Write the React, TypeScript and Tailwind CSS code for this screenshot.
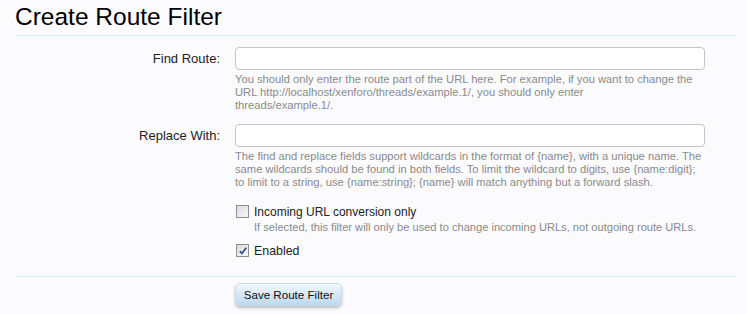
import { ReactNode } from 'react'

const FONT = "font-['Liberation_Sans',Arial,sans-serif]"

function Box({ checked }: { checked?: boolean }) {
  return (
    <span className="relative mt-[1px] inline-flex size-[13px] shrink-0 items-center justify-center border border-[#8e8f8f] bg-gradient-to-br from-[#dcdcdc] to-[#f8f8f8]">
      {checked && (
        <svg viewBox="0 0 11 11" className="size-[10px]">
          <path d="M2 5.5 L4.3 8.2 L9 2" fill="none" stroke="#2b4592" strokeWidth="1.8" />
        </svg>
      )}
    </span>
  )
}

function Row({ label, children }: { label: string; children: ReactNode }) {
  return (
    <div className="flex gap-[15px]">
      <div className="w-[205px] shrink-0 text-right text-[13px] leading-[23px] text-[#222]">{label}</div>
      <div className="w-[470px]">{children}</div>
    </div>
  )
}

// lines kept as in the original wrap
function Hint({ lines }: { lines: string[] }) {
  return (
    <p className="mt-[3px] text-[11.2px] leading-[13px] text-[#8a8a8a]">
      {lines.map((l) => (
        <span key={l} className="block whitespace-nowrap">
          {l}
        </span>
      ))}
    </p>
  )
}

export default function App() {
  return (
    <div className={`min-h-screen bg-[#fbfbfe] pl-[15px] pr-[12px] ${FONT}`}>
      <h1 className="h-[36px] border-b border-[#d7ecfa] pt-[1px] text-[24.5px] leading-[32px] text-black">
        Create Route Filter
      </h1>

      <div className="mt-[11px] flex flex-col gap-[12px]">
        <Row label="Find Route:">
          <input className="block h-[23px] w-full rounded-[4px] border border-[#c4c4c4] bg-white" />
          <Hint
            lines={[
              'You should only enter the route part of the URL here. For example, if you want to change the',
              'URL http://localhost/xenforo/threads/example.1/, you should only enter',
              'threads/example.1/.',
            ]}
          />
        </Row>

        <Row label="Replace With:">
          <input className="block h-[23px] w-full rounded-[4px] border border-[#c4c4c4] bg-white" />
          <Hint
            lines={[
              'The find and replace fields support wildcards in the format of {name}, with a unique name. The',
              'same wildcards should be found in both fields. To limit the wildcard to digits, use {name:digit};',
              'to limit to a string, use {name:string}; {name} will match anything but a forward slash.',
            ]}
          />
        </Row>
      </div>

      <div className="ml-[221px] mt-[15px] flex flex-col">
        <label className="flex gap-[5px]">
          <Box />
          <span>
            <span className="block text-[12px] leading-[16px] text-[#222]">Incoming URL conversion only</span>
            <span className="mt-[1px] block text-[11.1px] leading-[13px] text-[#8a8a8a]">
              If selected, this filter will only be used to change incoming URLs, not outgoing route URLs.
            </span>
          </span>
        </label>
        <label className="mt-[9px] flex gap-[5px]">
          <Box checked />
          <span className="text-[12.4px] leading-[16px] text-[#222]">Enabled</span>
        </label>
      </div>

      <div className="mt-[17px] border-t border-[#d7ecfa] pl-[220px] pt-[5px]">
        <button className="h-[23px] w-[107px] rounded-[5px] border border-[#c9dbea] bg-gradient-to-b from-[#f2f8fd] to-[#bcd8ef] text-[11.6px] text-[#111] shadow-[0_2px_3px_rgba(0,0,0,0.25)]">
          Save Route Filter
        </button>
      </div>
    </div>
  )
}
